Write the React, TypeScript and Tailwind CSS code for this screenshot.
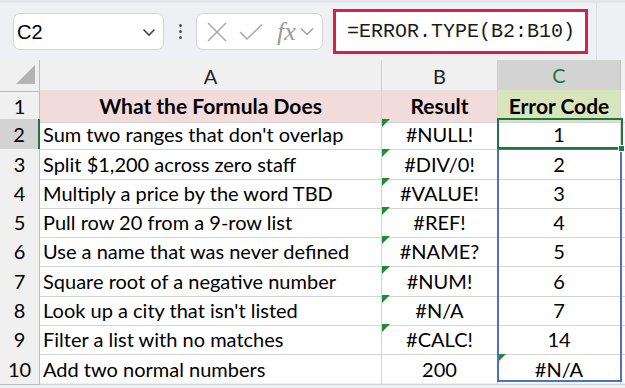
import React from "react";

const rows: [string, string, string][] = [
  ["Sum two ranges that don't overlap", "#NULL!", "1"],
  ["Split $1,200 across zero staff", "#DIV/0!", "2"],
  ["Multiply a price by the word TBD", "#VALUE!", "3"],
  ["Pull row 20 from a 9-row list", "#REF!", "4"],
  ["Use a name that was never defined", "#NAME?", "5"],
  ["Square root of a negative number", "#NUM!", "6"],
  ["Look up a city that isn't listed", "#N/A", "7"],
  ["Filter a list with no matches", "#CALC!", "14"],
  ["Add two normal numbers", "200", "#N/A"],
];

const cell = "font-['Lato','Open_Sans',sans-serif] text-[20px] text-black";

function Flag() {
  return (
    <svg className="absolute left-0 top-0" width="8" height="8" viewBox="0 0 8 8">
      <path d="M0 0H8L0 8Z" fill="#1e8c2f" />
    </svg>
  );
}

export default function App() {
  return (
    <div className="w-[625px] h-[388px] overflow-hidden bg-[#eef0f3] relative">
      <div className="h-[3px] bg-[#e2e4e8]" />
      {/* barra de fórmulas */}
      <div className="h-[57px] flex items-center pl-[13px] font-['Liberation_Sans',sans-serif]">
        <div className="w-[151px] h-[37px] bg-white border border-[#d3d3d3] rounded-[7px] flex items-center pl-[3px] pr-[7px]">
          <span className="text-[20px] text-black flex-1">C2</span>
          <svg width="14" height="10" viewBox="0 0 14 10">
            <path d="M1.5 2.5L7 8L12.5 2.5" fill="none" stroke="#444" strokeWidth="1.6" />
          </svg>
        </div>
        <div className="w-[32px] flex flex-col items-center gap-[3px]">
          <div className="w-[3px] h-[3px] rounded-full bg-[#555]" />
          <div className="w-[3px] h-[3px] rounded-full bg-[#555]" />
          <div className="w-[3px] h-[3px] rounded-full bg-[#555]" />
        </div>
        <div className="w-[127px] h-[37px] bg-white border border-[#d3d3d3] rounded-[7px] flex items-center pl-[9px]">
          <svg width="22" height="22" viewBox="0 0 22 22">
            <path d="M2 2L20 20M20 2L2 20" stroke="#a8a8a8" strokeWidth="1.5" />
          </svg>
          <svg className="ml-[11px]" width="24" height="18" viewBox="0 0 24 18">
            <path d="M1 9L8 16L23 1.5" fill="none" stroke="#a8a8a8" strokeWidth="1.5" />
          </svg>
          <span className="ml-[14px] font-['Liberation_Serif',serif] italic text-[26px] text-[#9a9a9a] leading-none">fx</span>
          <svg className="ml-[4px]" width="14" height="9" viewBox="0 0 14 9">
            <path d="M1 1.5L7 7.5L13 1.5" fill="none" stroke="#a0a0a0" strokeWidth="1.4" />
          </svg>
        </div>
        <div className="ml-[10px] w-[255px] h-[45px] bg-white border-[3px] border-[#dc1e4b] flex items-center pl-[11px]">
          <span className="font-['Liberation_Mono',monospace] text-[20px] text-[#1a1a1a]">=ERROR.TYPE(B2:B10)</span>
        </div>
        <div className="ml-[8px] w-px h-[60px] self-start bg-[#dcdfe3]" />
      </div>

      {/* grade */}
      <div className="relative bg-white">
        <div className="grid grid-cols-[40px_342px_116px_123px_1fr] h-[30px] bg-[#f0f0f0] text-[20px] font-['Lato',sans-serif]">
          <div className="relative border-r border-b border-[#bdbdbd]">
            <svg className="absolute left-[16px] top-[5px]" width="19" height="19" viewBox="0 0 19 19">
              <path d="M19 0V19H0Z" fill="#b4b4b4" />
            </svg>
          </div>
          <div className="border-r border-b border-[#d0d0d0] flex items-center justify-center text-[#222]">A</div>
          <div className="border-r border-b border-[#d0d0d0] flex items-center justify-center text-[#222]">B</div>
          <div className="bg-[#d3d3d3] border-r border-b-2 border-b-[#217346] border-r-[#c0c0c0] flex items-center justify-center text-[#217346]">C</div>
          <div className="border-b border-[#d0d0d0]" />
        </div>

        <div className="grid grid-cols-[40px_342px_116px_123px_1fr] h-[29.3px]">
          <div className={`${cell} bg-[#f0f0f0] border-r border-b border-[#bdbdbd] flex items-center justify-center text-[#333]`}>1</div>
          <div className={`${cell} bg-[#f2dcdb] border-r border-b border-[#d4d4d4] flex items-center justify-center font-bold text-[21px]`}>What the Formula Does</div>
          <div className={`${cell} bg-[#f2dcdb] border-r border-b border-[#d4d4d4] flex items-center justify-center font-bold text-[21px]`}>Result</div>
          <div className={`${cell} bg-[#d8e4bc] border-r border-b border-[#d4d4d4] flex items-center justify-center font-bold text-[21px]`}>Error Code</div>
          <div className="bg-white border-b border-[#d4d4d4]" />
        </div>

        {rows.map(([a, b, c], i) => (
          <div key={i} className="grid grid-cols-[40px_342px_116px_123px_1fr] h-[29.3px]">
            <div
              className={`${cell} border-b flex items-center justify-center ${
                i === 0
                  ? "bg-[#d3d3d3] text-[#217346] border-r-2 border-r-[#217346] border-b-[#bdbdbd]"
                  : "bg-[#f0f0f0] text-[#333] border-r border-[#bdbdbd]"
              }`}
            >
              {i + 2}
            </div>
            <div className={`${cell} border-r border-b border-[#d4d4d4] flex items-center pl-[3px] whitespace-nowrap`}>{a}</div>
            <div className={`${cell} relative border-r border-b border-[#d4d4d4] flex items-center justify-center`}>
              {i < 8 && <Flag />}
              {b}
            </div>
            <div className={`${cell} relative border-r border-b border-[#d4d4d4] flex items-center justify-center`}>
              {i === 8 && <Flag />}
              {c}
            </div>
            <div className="border-b border-[#d4d4d4]" />
          </div>
        ))}

        {/* seleção */}
        <div className="absolute left-[497px] top-[88px] w-[125px] h-[234px] border-2 border-[#4a72c0] pointer-events-none" />
        <div className="absolute left-[497px] top-[58px] w-[126px] h-[31px] border-2 border-[#217346] pointer-events-none" />
        <div className="absolute left-[618px] top-[85px] w-[7px] h-[7px] bg-[#217346] border border-white" />
      </div>
    </div>
  );
}
